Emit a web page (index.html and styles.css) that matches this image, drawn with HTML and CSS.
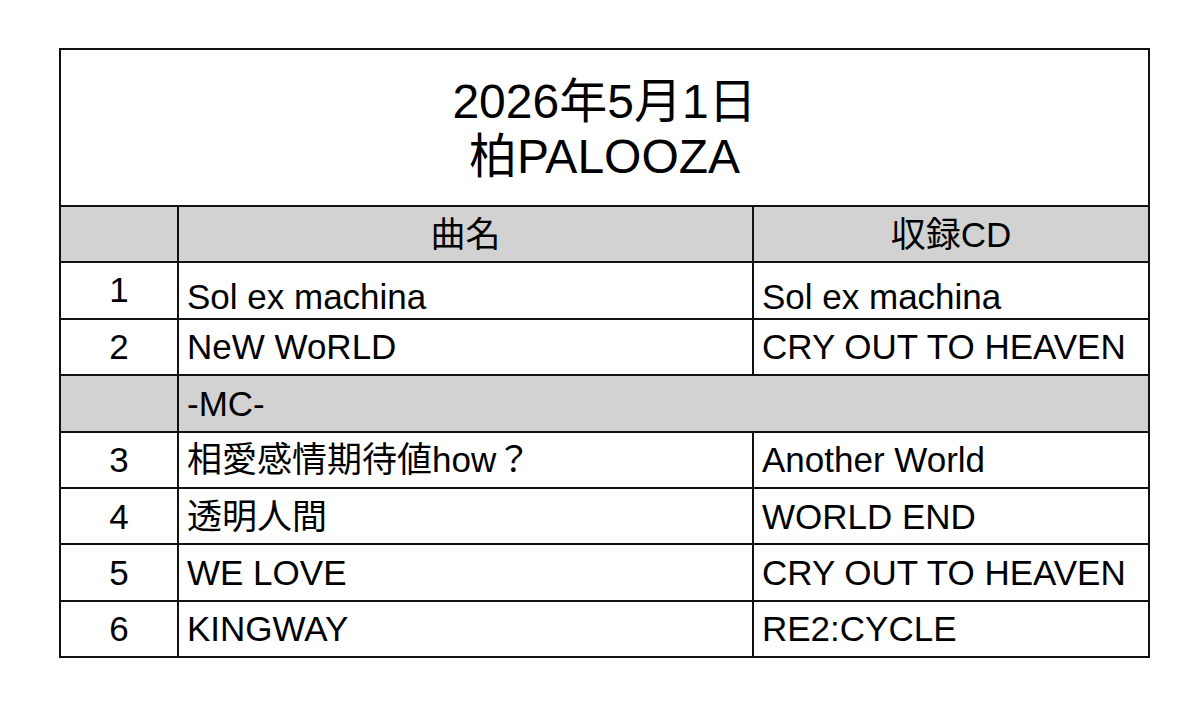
FILE: index.html
```html
<!DOCTYPE html>
<html lang="ja">
<head>
<meta charset="utf-8">
<link rel="stylesheet" href="styles.css">
</head>
<body>
<table class="setlist">
  <colgroup>
    <col class="c-no">
    <col class="c-song">
    <col class="c-cd">
  </colgroup>
  <tr class="title-row">
    <td colspan="3"><div class="t1">2026年5月1日</div><div class="t2">柏PALOOZA</div></td>
  </tr>
  <tr class="head">
    <td></td>
    <td class="center">曲名</td>
    <td class="center">収録CD</td>
  </tr>
  <tr class="first">
    <td class="no up">1</td>
    <td class="down">Sol ex machina</td>
    <td class="down">Sol ex machina</td>
  </tr>
  <tr>
    <td class="no">2</td>
    <td>NeW WoRLD</td>
    <td>CRY OUT TO HEAVEN</td>
  </tr>
  <tr class="mc">
    <td></td>
    <td colspan="2" class="mc-cell">-MC-</td>
  </tr>
  <tr>
    <td class="no">3</td>
    <td>相愛感情期待値how？</td>
    <td>Another World</td>
  </tr>
  <tr>
    <td class="no">4</td>
    <td>透明人間</td>
    <td>WORLD END</td>
  </tr>
  <tr>
    <td class="no">5</td>
    <td>WE LOVE</td>
    <td>CRY OUT TO HEAVEN</td>
  </tr>
  <tr>
    <td class="no">6</td>
    <td>KINGWAY</td>
    <td>RE2:CYCLE</td>
  </tr>
</table>
</body>
</html>
```

FILE: styles.css
```css
html, body {
  margin: 0;
  padding: 0;
  background: #ffffff;
}

body {
  font-family: "Liberation Sans", "Noto Sans CJK JP", sans-serif;
  color: #000000;
}

.setlist {
  margin: 48px 0 0 59px;
  width: 1089px;
  border-collapse: collapse;
  table-layout: fixed;
  font-size: 35px;
}

.c-no { width: 118px; }
.c-song { width: 575px; }
.c-cd { width: 396px; }

.setlist td {
  border: 2px solid #111111;
  height: 54.4px;
  padding: 0 0 0 8px;
  line-height: 1;
  white-space: nowrap;
  vertical-align: middle;
}

.title-row td {
  height: 155px;
  text-align: center;
  padding: 0;
  font-size: 48px;
  line-height: 55px;
}

.t1 { margin-top: 2px; }

.head td {
  background: #d2d2d2;
  padding: 0;
}

.center { text-align: center; }

.setlist td.no {
  text-align: center;
  padding: 0;
}

.setlist td.up {
  vertical-align: top;
  padding-top: 9px;
  height: 45.4px;
}

.setlist td.down {
  vertical-align: bottom;
  padding-bottom: 4px;
  height: 50.4px;
}

.mc td {
  background: #d2d2d2;
}
```
